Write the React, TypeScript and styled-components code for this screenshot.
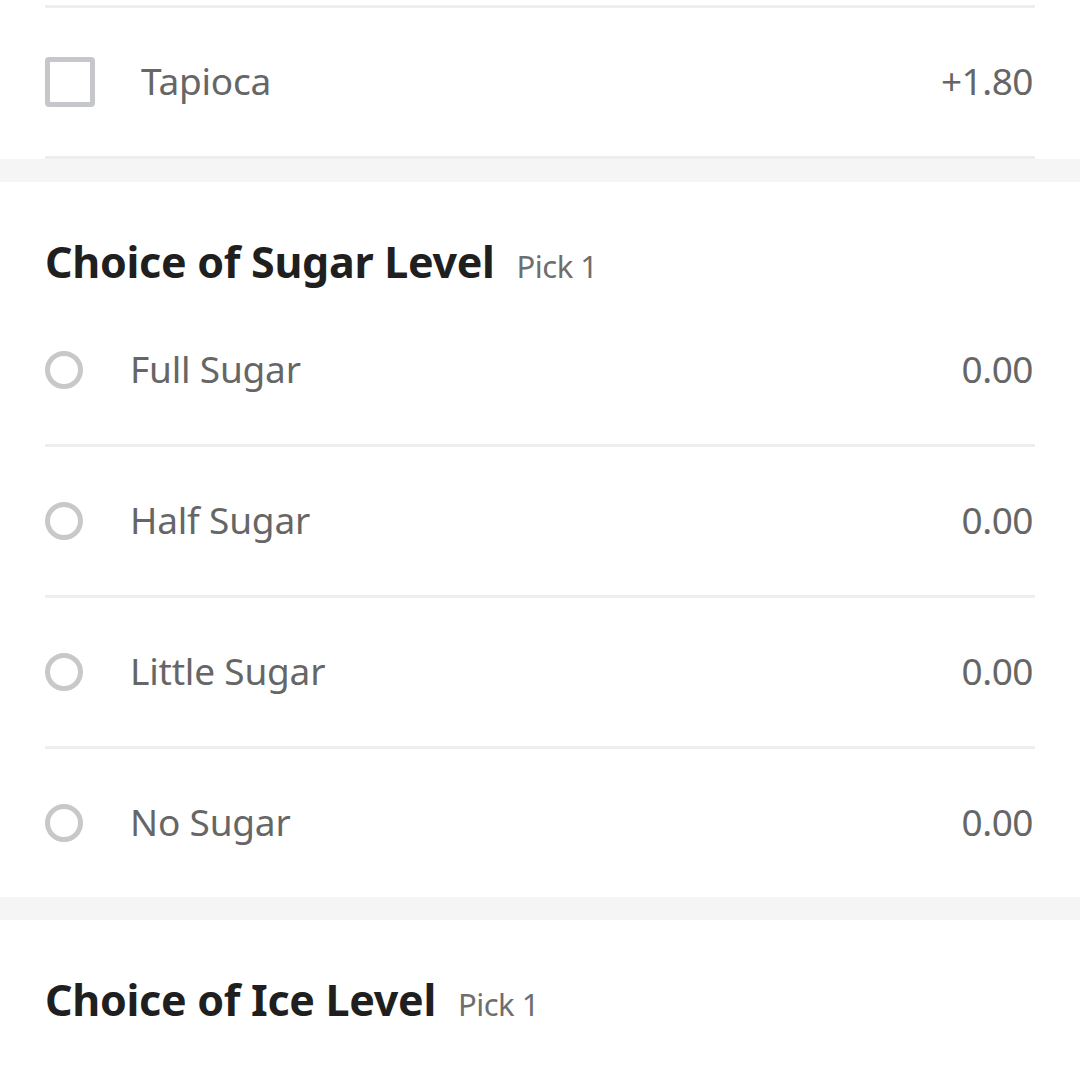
import React from "react";
import styled, { createGlobalStyle } from "styled-components";

const Global = createGlobalStyle`
  html, body { margin: 0; padding: 0; background: #ffffff; }
  body { font-family: "Noto Sans", "Open Sans", sans-serif; -webkit-font-smoothing: antialiased; }
  * { box-sizing: border-box; }
`;

const Page = styled.div`
  width: 1080px;
  height: 1080px;
  overflow: hidden;
  background: #ffffff;
`;

const Section = styled.section<{ $top?: number }>`
  background: #ffffff;
  padding: ${(p) => p.$top ?? 0}px 45px 0;
`;

const Gap = styled.div`
  height: 23px;
  background: #f5f5f5;
`;

const Header = styled.div`
  display: flex;
  align-items: baseline;
  height: 114px;
  padding-top: 53px;
  line-height: 54px;
  overflow: hidden;
`;

const Title = styled.h2`
  margin: 0;
  font-size: 43px;
  line-height: 54px;
  font-weight: 700;
  color: #1f1f1f;
  letter-spacing: -0.3px;
`;

const Pick = styled.span`
  margin-left: 22px;
  font-size: 31px;
  line-height: 54px;
  color: #6e6e6e;
  letter-spacing: -0.5px;
`;

const List = styled.div<{ $bordered?: boolean }>`
  display: flex;
  flex-direction: column;
  ${(p) => (p.$bordered ? "border-top: 3px solid #eeeeee; border-bottom: 3px solid #eeeeee;" : "")}
`;

const Row = styled.div`
  display: flex;
  align-items: center;
  height: 148px;
  padding-bottom: 3px;
  & + & {
    border-top: 3px solid #eeeeee;
    height: 151px;
  }
`;

const Checkbox = styled.span`
  width: 50px;
  height: 50px;
  border: 5px solid #c5c7cb;
  border-radius: 4px;
  flex-shrink: 0;
  margin-top: 3px;
  margin-right: 46px;
`;

const Radio = styled.span`
  width: 38px;
  height: 38px;
  border: 5px solid #c8c8c8;
  border-radius: 50%;
  flex-shrink: 0;
  margin-top: 3px;
  margin-right: 47px;
`;

const Label = styled.span`
  flex: 1;
  font-size: 37px;
  color: #666666;
  letter-spacing: -0.2px;
`;

const Price = styled.span`
  font-size: 37px;
  color: #666666;
  margin-right: 2px;
  letter-spacing: -0.5px;
`;

const sugar = ["Full Sugar", "Half Sugar", "Little Sugar", "No Sugar"];

export default function App() {
  return (
    <Page>
      <Global />
      <Section $top={5}>
        <List $bordered>
          <Row>
            <Checkbox />
            <Label>Tapioca</Label>
            <Price>+1.80</Price>
          </Row>
        </List>
      </Section>
      <Gap />
      <Section>
        <Header>
          <Title>Choice of Sugar Level</Title>
          <Pick>Pick 1</Pick>
        </Header>
        <List>
          {sugar.map((s) => (
            <Row key={s}>
              <Radio />
              <Label>{s}</Label>
              <Price>0.00</Price>
            </Row>
          ))}
        </List>
      </Section>
      <Gap />
      <Section>
        <Header>
          <Title>Choice of Ice Level</Title>
          <Pick>Pick 1</Pick>
        </Header>
      </Section>
    </Page>
  );
}
